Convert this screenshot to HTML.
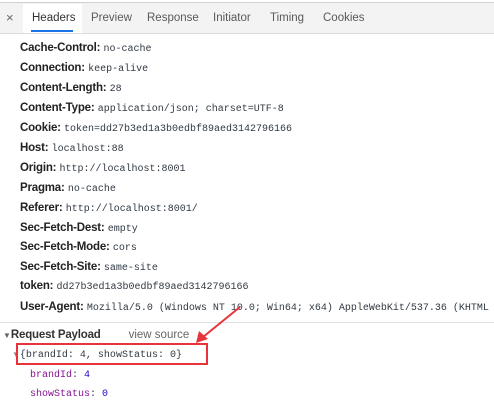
<!DOCTYPE html><html><head><style>
body{margin:0;width:494px;height:406px;overflow:hidden;background:#fff;font-family:"Liberation Sans",sans-serif;font-size:12px;color:#303942;position:relative}
.wrap{position:absolute;left:0;top:0;width:494px;height:406px;overflow:hidden}
.top{position:absolute;left:0;top:0;width:494px;height:2px;background:#fff;border-bottom:1px solid #d0d0d0}
.tabs{position:absolute;left:0;top:3px;width:494px;height:30px;background:#f3f3f3;border-bottom:1px solid #dcdcdc}
.tab{position:absolute;top:0;height:30px;line-height:30px;color:#5a5a5a;font-size:11.5px}
.row{position:absolute;left:20px;white-space:nowrap;height:20px;line-height:20px;font-size:11.5px}
.row b{font-weight:bold;color:#222;letter-spacing:-0.2px}
.m{font-family:"Liberation Mono",monospace;font-size:10px;color:#303942}
.k{color:#881391}.n{color:#1c00cf}
</style></head><body><div class="wrap">
<div class="top"></div>
<div class="tabs">
<div class="tab" style="left:6px;color:#666;font-size:13px">×</div>
<div style="position:absolute;left:23px;top:1px;width:59px;height:29px;background:#fff"></div>
<div class="tab" style="left:32px;color:#333">Headers</div>
<div style="position:absolute;left:31px;top:27px;width:42px;height:2px;background:#1a73e8"></div>
<div class="tab" style="left:91px">Preview</div>
<div class="tab" style="left:147px">Response</div>
<div class="tab" style="left:213px">Initiator</div>
<div class="tab" style="left:270px">Timing</div>
<div class="tab" style="left:323px">Cookies</div>
</div>
<div class="row" style="top:38px"><b>Cache-Control:</b> <span class="m">no-cache</span></div>
<div class="row" style="top:58px"><b>Connection:</b> <span class="m">keep-alive</span></div>
<div class="row" style="top:78px"><b>Content-Length:</b> <span class="m">28</span></div>
<div class="row" style="top:98px"><b>Content-Type:</b> <span class="m">application/json; charset=UTF-8</span></div>
<div class="row" style="top:118px"><b>Cookie:</b> <span class="m">token=dd27b3ed1a3b0edbf89aed3142796166</span></div>
<div class="row" style="top:138px"><b>Host:</b> <span class="m">localhost:88</span></div>
<div class="row" style="top:158px"><b>Origin:</b> <span class="m">http://localhost:8001</span></div>
<div class="row" style="top:178px"><b>Pragma:</b> <span class="m">no-cache</span></div>
<div class="row" style="top:198px"><b>Referer:</b> <span class="m">http://localhost:8001/</span></div>
<div class="row" style="top:218px"><b>Sec-Fetch-Dest:</b> <span class="m">empty</span></div>
<div class="row" style="top:237px"><b>Sec-Fetch-Mode:</b> <span class="m">cors</span></div>
<div class="row" style="top:257px"><b>Sec-Fetch-Site:</b> <span class="m">same-site</span></div>
<div class="row" style="top:276px"><b>token:</b> <span class="m">dd27b3ed1a3b0edbf89aed3142796166</span></div>
<div class="row" style="top:297px;width:474px;overflow:hidden"><b>User-Agent:</b> <span class="m">Mozilla/5.0 (Windows NT 10.0; Win64; x64) AppleWebKit/537.36 (KHTML</span></div>
<div style="position:absolute;left:0;top:322px;width:494px;height:1px;background:#e0e0e0"></div>
<div class="row" style="left:3px;top:325px"><span style="font-size:8px;color:#666">▼</span><b style="color:#333">Request Payload</b><span style="margin-left:28px;color:#666">view source</span></div>
<div class="row" style="left:12px;top:344px"><span style="font-size:8px;color:#888">▼</span><span class="m">{brandId: 4, showStatus: 0}</span></div>
<div style="position:absolute;left:16px;top:343px;width:188px;height:18px;border:2px solid #e8333b"></div>
<div class="row" style="left:30px;top:364px"><span class="m"><span class="k">brandId</span>: <span class="n">4</span></span></div>
<div class="row" style="left:30px;top:383px"><span class="m"><span class="k">showStatus</span>: <span class="n">0</span></span></div>
<svg style="position:absolute;left:0;top:0" width="494" height="406"><line x1="240" y1="307" x2="203" y2="337" stroke="#e8333b" stroke-width="2"/><polygon points="196,343 199,331 208,339" fill="#e8333b"/></svg>
</div></body></html>
